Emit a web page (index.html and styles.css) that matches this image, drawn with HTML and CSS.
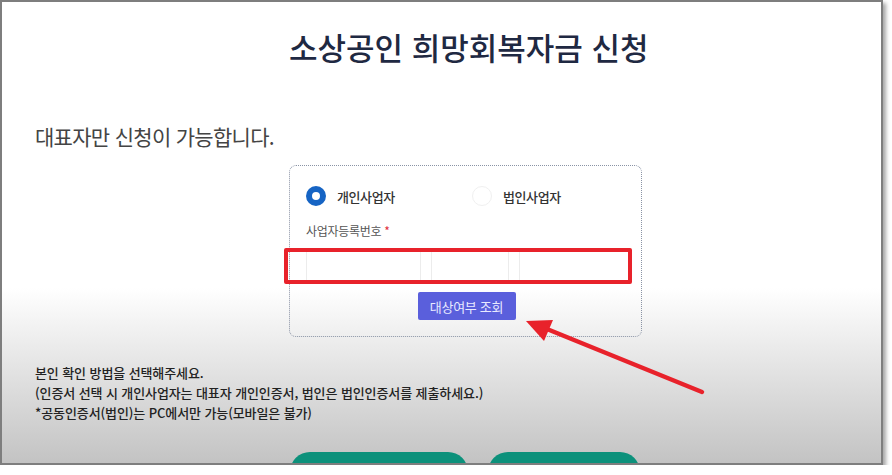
FILE: index.html
```html
<!DOCTYPE html>
<html lang="ko">
    <head>
        <meta charset="UTF-8" />
        <meta name="viewport" content="width=device-width, initial-scale=1.0" />
        <link rel="stylesheet" href="styles.css">
    </head>
    <body>
        <div class="shot">
            <div class="page">
                <h1 class="title center">소상공인 희망회복자금 신청</h1>
                <p class="lead">대표자만 신청이 가능합니다.</p>

                <div class="form-box center">
                    <div class="radios">
                        <label class="radio">
                            <span class="dot checked"></span>
                            <span>개인사업자</span>
                        </label>
                        <label class="radio">
                            <span class="dot"></span>
                            <span>법인사업자</span>
                        </label>
                    </div>
                    <p class="field-label">사업자등록번호 <span class="req">*</span></p>
                    <div class="inputs">
                        <input type="text" class="in-a">
                        <input type="text" class="in-b">
                        <input type="text" class="in-c">
                    </div>
                    <div class="actions">
                        <button class="check-btn">대상여부 조회</button>
                    </div>
                </div>

                <div class="notes">
                    <p>본인 확인 방법을 선택해주세요.</p>
                    <p>(인증서 선택 시 개인사업자는 대표자 개인인증서, 법인은 법인인증서를 제출하세요.)</p>
                    <p>*공동인증서(법인)는 PC에서만 가능(모바일은 불가)</p>
                </div>

                <div class="auth-buttons">
                    <button class="pill wide">공동인증서 로그인</button>
                    <button class="pill">간편인증</button>
                </div>
            </div>
        </div>

        <!-- red annotation drawn over the screenshot -->
        <div class="highlight"></div>
        <svg class="arrow" width="892" height="475" viewBox="0 0 892 475">
            <line x1="702" y1="392" x2="542" y2="327" stroke="#e8222b" stroke-width="4.5" stroke-linecap="round" />
            <polygon points="526,321 553,320 544,341" fill="#e8222b" />
        </svg>
    </body>
</html>
```

FILE: styles.css
```css
* {
    box-sizing: border-box;
}
body {
    margin: 0;
    background-color: #fff;
    font-family: "Noto Sans CJK KR", "Noto Sans", sans-serif;
}
.shot {
    width: 883px;
    height: 465px;
    border: 2px solid #7e7e7e;
    box-shadow: 3px 3px 4px rgba(0, 0, 0, 0.35);
    overflow: hidden;
    background: linear-gradient(to bottom, #fff 0, #fff 286px, #c3c3c3 100%);
}
.page {
    padding: 25px 0 0 33px;
}
.center {
    width: 353px;
    margin-left: 254px;
}
.title {
    margin-top: 0;
    margin-bottom: 0;
    font-size: 31px;
    font-weight: 500;
    line-height: 40px;
    color: #1f2942;
    text-align: center;
    white-space: nowrap;
}
.lead {
    margin: 55px 0 0 0;
    font-size: 21px;
    line-height: 28px;
    letter-spacing: -0.7px;
    color: #444;
}
.form-box {
    margin-top: 15px;
    padding: 20px 14px 16px 16px;
    border: 1.5px dotted #8a93a5;
    border-radius: 7px;
}
.radios {
    display: grid;
    grid-template-columns: 166px 1fr;
}
.radio {
    display: flex;
    align-items: center;
    gap: 11px;
    font-size: 13px;
    font-weight: 500;
    letter-spacing: -0.4px;
    color: #333;
}
.dot {
    width: 20px;
    height: 20px;
    border-radius: 50%;
    border: 1px solid #f0f0f0;
    background: #fff;
}
.dot.checked {
    border: 6px solid #1664c4;
}
.field-label {
    margin: 17px 0 0 0;
    font-size: 12px;
    line-height: 16px;
    letter-spacing: -0.3px;
    color: #555;
}
.req {
    color: #e0303a;
}
.inputs {
    display: flex;
    gap: 10px;
    margin-top: 9px;
}
.inputs input {
    height: 33px;
    border: 1px solid #ececec;
    background: #fff;
    outline: none;
}
.in-a {
    width: 115px;
}
.in-b {
    width: 78px;
}
.in-c {
    width: 112px;
}
.actions {
    display: flex;
    justify-content: center;
    margin-top: 11px;
}
.check-btn {
    width: 98px;
    height: 28px;
    border: none;
    border-radius: 2px;
    background-color: #5a5fdc;
    color: #e8e9ff;
    font-family: inherit;
    font-size: 13px;
    letter-spacing: -0.3px;
}
.notes {
    margin-top: 26px;
}
.notes p {
    margin: 0;
    font-size: 13px;
    font-weight: 500;
    line-height: 20px;
    letter-spacing: -0.1px;
    color: #222;
}
.auth-buttons {
    display: flex;
    gap: 20px;
    margin: 29px 0 0 255px;
}
.pill {
    width: 152px;
    height: 40px;
    border: none;
    border-radius: 20px;
    background-color: #0c917b;
    color: #fff;
    font-family: inherit;
    font-size: 14px;
    font-weight: 500;
}
.pill.wide {
    width: 178px;
}
.highlight {
    position: absolute;
    left: 284px;
    top: 248px;
    width: 348px;
    height: 36px;
    border: 4px solid #e8222b;
    border-radius: 2px;
}
.arrow {
    position: absolute;
    left: 0;
    top: 0;
    pointer-events: none;
}
```
